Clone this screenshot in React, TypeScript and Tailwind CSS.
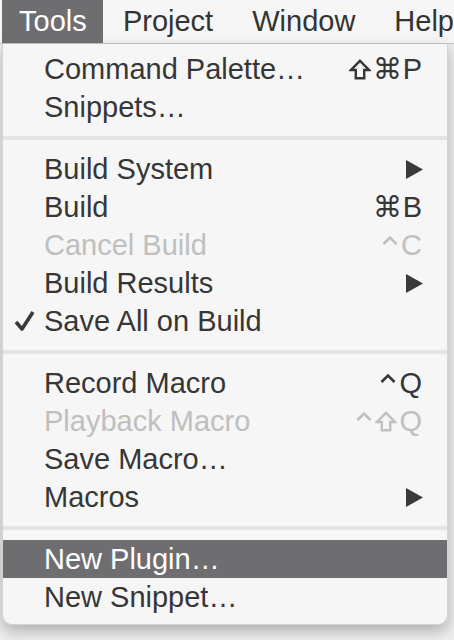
import { ReactNode } from "react";

type Item = {
  label: string;
  shortcut?: ReactNode;
  submenu?: boolean;
  disabled?: boolean;
  checked?: boolean;
  active?: boolean;
};

// mac modifier glyphs, drawn so they match the menu's weight
const Shift = ({ c }: { c: string }) => (
  <svg width="22" height="21" viewBox="0 0 22 21" className="mr-[2px]">
    <path
      d="M11 1.8 L20 11 H15.2 V19.2 H6.8 V11 H2 Z"
      fill="none"
      stroke={c}
      strokeWidth="2.4"
      strokeLinejoin="miter"
    />
  </svg>
);

const Ctrl = ({ c }: { c: string }) => (
  <svg width="16" height="21" viewBox="0 0 16 21" className="mr-[3px]">
    <path d="M1.5 9 L8 2.5 L14.5 9" fill="none" stroke={c} strokeWidth="2.6" />
  </svg>
);

const DARK = "#363636";
const DIM = "#bfbfbf";

const groups: Item[][] = [
  [
    {
      label: "Command Palette…",
      shortcut: (
        <>
          <Shift c={DARK} />
          <span>⌘P</span>
        </>
      ),
    },
    { label: "Snippets…" },
  ],
  [
    { label: "Build System", submenu: true },
    { label: "Build", shortcut: <span>⌘B</span> },
    {
      label: "Cancel Build",
      shortcut: (
        <>
          <Ctrl c={DIM} />
          <span>C</span>
        </>
      ),
      disabled: true,
    },
    { label: "Build Results", submenu: true },
    { label: "Save All on Build", checked: true },
  ],
  [
    {
      label: "Record Macro",
      shortcut: (
        <>
          <Ctrl c={DARK} />
          <span>Q</span>
        </>
      ),
    },
    {
      label: "Playback Macro",
      shortcut: (
        <>
          <Ctrl c={DIM} />
          <Shift c={DIM} />
          <span>Q</span>
        </>
      ),
      disabled: true,
    },
    { label: "Save Macro…" },
    { label: "Macros", submenu: true },
  ],
  [
    { label: "New Plugin…", active: true },
    { label: "New Snippet…" },
  ],
];

const Arrow = () => (
  <svg width="17" height="19" viewBox="0 0 17 19">
    <polygon points="0,0 17,9.5 0,19" fill="#3a3a3a" />
  </svg>
);

const Check = () => (
  <svg width="21" height="20" viewBox="0 0 21 20" className="absolute left-[11px]">
    <path d="M2 11 L8 18 L19 1" fill="none" stroke="#3a3a3a" strokeWidth="3.6" strokeLinejoin="round" />
  </svg>
);

const Row = ({ item }: { item: Item }) => {
  const color = item.active
    ? "bg-[#6e6e70] text-white"
    : item.disabled
    ? "text-[#bfbfbf]"
    : "text-[#363636]";
  return (
    <div className={`relative h-[38px] flex items-center justify-between pl-[41px] pr-[24px] ${color}`}>
      {item.checked && <Check />}
      <span>{item.label}</span>
      {item.shortcut && <span className="flex items-center tracking-[1px]">{item.shortcut}</span>}
      {item.submenu && <Arrow />}
    </div>
  );
};

const Separator = () => (
  <div className="h-[24px] flex items-center">
    <div className="w-full h-[4px] bg-[#e4e4e4]" />
  </div>
);

export default function App() {
  return (
    <div className="w-[454px] h-[640px] bg-[#efefef] overflow-hidden text-[29px] leading-none font-['Liberation_Sans','DejaVu_Sans',sans-serif]">
      <div className="h-[44px] flex items-stretch bg-[#f6f6f6] border-b border-[#c6c6c6] text-[#333]">
        <div className="ml-[2px] w-[106px] pl-[17px] flex items-center bg-[#6e6e70] text-white">Tools</div>
        <div className="pl-[20px] flex items-center">Project</div>
        <div className="pl-[39px] flex items-center">Window</div>
        <div className="pl-[39px] flex items-center">Help</div>
      </div>
      <div className="ml-[2px] w-[446px] bg-[#f6f6f6] border-x border-b border-[#d4d4d4] rounded-b-[10px] pt-[6px] pb-[8px] shadow-[0_6px_16px_rgba(0,0,0,0.28)]">
        {groups.map((g, i) => (
          <div key={i}>
            {i > 0 && <Separator />}
            {g.map((item) => (
              <Row key={item.label} item={item} />
            ))}
          </div>
        ))}
      </div>
    </div>
  );
}
